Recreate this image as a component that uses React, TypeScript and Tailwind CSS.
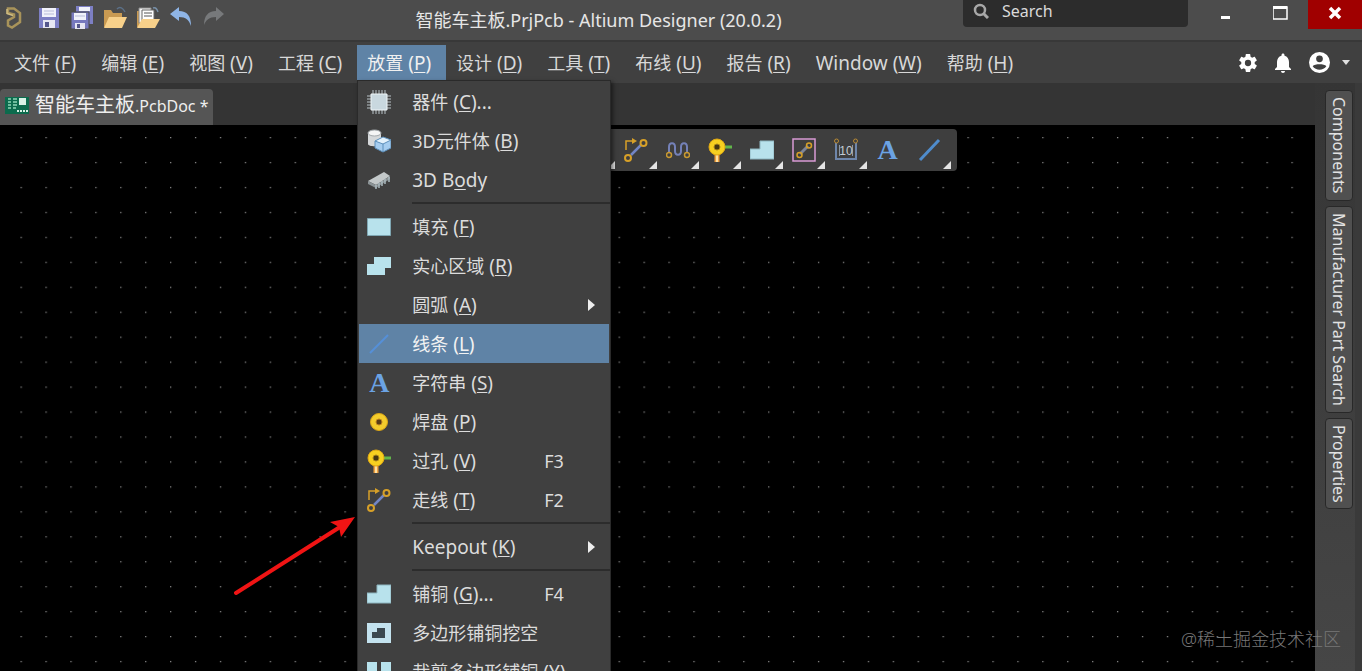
import React from 'react';

interface MenuEntry {
  label: string;
  hotkey: string;
}

interface PlaceEntry {
  label: string;
  latin?: string;
  hotkey?: string;
  after?: string;
  icon?: React.ReactNode;
  shortcut?: string;
  submenu?: boolean;
  active?: boolean;
  separator?: boolean;
}

const Svg: React.FC<{ children: React.ReactNode }> = ({ children }) => (
  <svg className="h-6 w-6 shrink-0" viewBox="0 0 24 24" fill="none" aria-hidden="true">
    {children}
  </svg>
);

const LogoIcon = () => (
  <svg className="h-6 w-[18px] shrink-0" viewBox="0 0 18 24" fill="none" aria-hidden="true">
    <path d="M3 2.500h6L15 7v9l-8 5.500-4-2v-5l6-3.500V8.500L3 7z" stroke="#a8935a" strokeWidth="2.500" />
    <path d="M2 3v4.500l6 2" stroke="#d0bd83" strokeWidth="1.500" />
  </svg>
);

const SaveIcon = () => (
  <Svg>
    <path d="M2 2h20v20H2z" fill="#7d7fc4" />
    <path d="M5 2h14v9H5z" fill="#f1f2fa" />
    <path d="M7 5h10M7 8h10" stroke="#b9bcd9" strokeWidth="1" />
    <path d="M6 14h12v8H6z" fill="#e6e6f2" />
    <path d="M8 16h4v5H8z" fill="#55578c" />
  </Svg>
);

const SaveAllIcon = () => (
  <Svg>
    <path d="M6 0h17v18H6z" fill="#7d7fc4" />
    <path d="M9 1h11v4H9z" fill="#f1f2fa" />
    <path d="M1 6h18v17H1z" fill="#7779be" stroke="#4c4c4c" strokeWidth="1" />
    <path d="M4 7h12v7H4z" fill="#f1f2fa" />
    <path d="M5 10h10" stroke="#b9bcd9" />
    <path d="M5 17h10v6H5z" fill="#e6e6f2" />
    <path d="M7 18h3v4H7z" fill="#55578c" />
  </Svg>
);

const FolderIcon = () => (
  <Svg>
    <path d="M1 4h7l2 3h9v14H1z" fill="#c99a52" />
    <path d="M1 22L6 11h18l-5 11z" fill="#f7d08a" />
    <path d="M14 3c3-3 6-1 8 3" stroke="#5b7088" strokeWidth="1.500" />
  </Svg>
);

const FolderDocsIcon = () => (
  <Svg>
    <path d="M1 5h6v16H1z" fill="#c99a52" />
    <path d="M3 2h12v15H3z" fill="#f6f6f6" stroke="#888" />
    <path d="M6 4h12v13H6z" fill="#fff" stroke="#666" />
    <path d="M8 7h8M8 10h8" stroke="#555" />
    <path d="M1 22L6 13h18l-5 9z" fill="#f7d08a" />
    <path d="M17 2c3-1 4 1 5 4" stroke="#7890a8" strokeWidth="1.500" />
  </Svg>
);

const UndoIcon = () => (
  <Svg>
    <path d="M1 8L10 1v4c8 0 12 5 12 15c-2-6-5-9-12-9v4z" fill="#8fb5e6" />
  </Svg>
);

const RedoIcon = () => (
  <Svg>
    <path d="M22 8L14 1v4C6 5 2 10 2 19c2-5 5-8 12-8v4z" fill="#77797b" />
  </Svg>
);

const ChipIcon = () => (
  <Svg>
    <path
      d="M6 0v24M9 0v24M12 0v24M15 0v24M18 0v24M0 6h24M0 9h24M0 12h24M0 15h24M0 18h24"
      stroke="#b9c3c8"
      strokeWidth="1"
    />
    <path d="M4 4h16v16H4z" fill="#c9d8df" />
    <path d="M4 4h16v16H4z" stroke="#eef4f6" />
  </Svg>
);

const ShapesIcon = () => (
  <Svg>
    <path d="M1 4v11c0 3 13 3 13 0V4z" fill="#d5d8da" />
    <ellipse cx="7.500" cy="4" rx="6.500" ry="3" fill="#f5f5f5" stroke="#a5aaad" />
    <path d="M8 12l8-4 8 3v8l-8 4-8-4z" fill="#a5cdf0" />
    <path d="M8 12l8 3 8-4-8-3z" fill="#e4f2fc" />
    <path d="M16 15v8M8 12l8 3 8-4M8 12v7l8 4 8-4v-8l-8-3z" stroke="#5c8fbb" />
  </Svg>
);

const DipIcon = () => (
  <Svg>
    <path d="M1 13L17 4l6 4-14 9z" fill="#c3c8c9" />
    <path d="M1 13v3l8 4 14-9V8L9 17z" fill="#8a9295" />
    <path d="M9 17v4M12 15v5M15 13v5M18 11v5M22 9v5" stroke="#a9b8bd" strokeWidth="1.500" />
  </Svg>
);

const FillIcon = () => (
  <Svg>
    <path d="M0.500 3.500h23v17h-23z" fill="#b8e2ec" stroke="#7fa6b2" />
  </Svg>
);

const RegionIcon = () => (
  <Svg>
    <path d="M7 3h17v11h-6v7H0v-11h7z" fill="#b8e2ec" />
  </Svg>
);

const LineIcon = () => (
  <Svg>
    <path d="M3 21L21 3" stroke="#5590d8" strokeWidth="2" />
  </Svg>
);

const ThickLineIcon = () => (
  <Svg>
    <path d="M2 22L21 2" stroke="#4f8ccc" strokeWidth="3" />
  </Svg>
);

const StringIcon = () => (
  <span className="w-6 shrink-0 text-center font-['Liberation_Serif',serif] text-[28px] leading-6 font-bold text-[#6ba3e4]">
    A
  </span>
);

const PadIcon = () => (
  <Svg>
    <circle cx="12" cy="12" r="8.500" fill="#f4cc2c" stroke="#dba616" />
    <circle cx="12" cy="12" r="3" fill="#573c17" stroke="#bd8220" />
  </Svg>
);

const ViaIcon = () => (
  <Svg>
    <path d="M9 14v10" stroke="#f0a040" strokeWidth="5" />
    <path d="M9 14v10" stroke="#ffe0a0" strokeWidth="2" />
    <path d="M14 9h10" stroke="#62b64a" strokeWidth="3" />
    <circle cx="9" cy="9" r="8" fill="#f7d020" stroke="#e0a812" />
    <circle cx="9" cy="9" r="3" fill="#453711" stroke="#aa851b" />
  </Svg>
);

const TrackIcon = () => (
  <Svg>
    <path d="M7 17L17 7" stroke="#7285c4" strokeWidth="2.500" />
    <path d="M2 12V3h8" stroke="#d7a028" strokeWidth="1.500" />
    <path d="M8 0l5 3-5 3z" fill="#d7a028" />
    <circle cx="19.500" cy="5" r="3" stroke="#d7a028" strokeWidth="2" />
    <circle cx="4" cy="20" r="3" stroke="#d7a028" strokeWidth="2" />
  </Svg>
);

const MeanderIcon = () => (
  <Svg>
    <path d="M3 14V9c0-5 6-5 6 0v4c0 5 6 5 6 0V9c0-5 6-5 6 0v5" stroke="#7481b8" strokeWidth="2" />
    <circle cx="3" cy="17" r="2.500" stroke="#c99930" strokeWidth="1.500" />
    <circle cx="21" cy="17" r="2.500" stroke="#c99930" strokeWidth="1.500" />
  </Svg>
);

const PourIcon = () => (
  <Svg>
    <path d="M10 3h14v18H0V11h10z" fill="#b8e2ec" stroke="#8eb6c0" strokeWidth="1" />
  </Svg>
);

const RoomIcon = () => (
  <Svg>
    <path d="M1 1h22v22H1z" stroke="#d99ad5" strokeWidth="1.500" />
    <path d="M8 16l8-8" stroke="#7d8598" strokeWidth="3" />
    <circle cx="17" cy="7.500" r="2.500" stroke="#d7a028" strokeWidth="1.500" />
    <circle cx="7.500" cy="17" r="2.500" stroke="#d7a028" strokeWidth="1.500" />
  </Svg>
);

const DimensionIcon = () => (
  <Svg>
    <path d="M2 5v16h20V5" stroke="#6e86ab" strokeWidth="2" />
    <path d="M5.500 7v11M18.500 7v11" stroke="#8d97a3" strokeWidth="1" />
    <text x="12" y="17" textAnchor="middle" fontSize="12" fill="#c3ccd4" fontFamily="Liberation Sans, sans-serif">
      10
    </text>
    <circle cx="2.500" cy="3" r="2" stroke="#b98a35" />
    <circle cx="21.500" cy="3" r="2" stroke="#b98a35" />
  </Svg>
);

const CutoutIcon = () => (
  <Svg>
    <path d="M0 2h24v20H0z" fill="#c3e2ee" />
    <path d="M10 7h8v10H5v-6h5z" fill="#3b4850" />
  </Svg>
);

const SliceIcon = () => (
  <Svg>
    <path d="M0 2h10v10H7v10H0zM14 2h10v20H14z" fill="#b8e2ec" />
  </Svg>
);

const DocIcon = () => (
  <Svg>
    <path d="M0 4h24v17H0z" fill="#0c6b4d" />
    <path d="M14 5h7v7h-7z" fill="#d8f2e6" />
    <path d="M3 6h3M3 9h3M3 12h3M3 15h3M8 6h4M8 9h4M8 12h4M8 15h3" stroke="#8fd8b8" strokeWidth="1.500" />
    <path d="M12 18h2M15 18h2M18 18h2M21 18h2" stroke="#d8f2e6" strokeWidth="2" />
  </Svg>
);

const quickTools = [
  { name: 'Save', icon: <SaveIcon /> },
  { name: 'Save All', icon: <SaveAllIcon /> },
  { name: 'Open', icon: <FolderIcon /> },
  { name: 'Open Project', icon: <FolderDocsIcon /> },
  { name: 'Undo', icon: <UndoIcon /> },
  { name: 'Redo', icon: <RedoIcon /> },
];

const menus: MenuEntry[] = [
  { label: '文件', hotkey: 'F' },
  { label: '编辑', hotkey: 'E' },
  { label: '视图', hotkey: 'V' },
  { label: '工程', hotkey: 'C' },
  { label: '放置', hotkey: 'P' },
  { label: '设计', hotkey: 'D' },
  { label: '工具', hotkey: 'T' },
  { label: '布线', hotkey: 'U' },
  { label: '报告', hotkey: 'R' },
  { label: 'Window', hotkey: 'W' },
  { label: '帮助', hotkey: 'H' },
];

const placeEntries: PlaceEntry[] = [
  { label: '器件', latin: ' (', hotkey: 'C', after: ')...', icon: <ChipIcon /> },
  { label: '3D元件体', latin: ' (', hotkey: 'B', after: ')', icon: <ShapesIcon /> },
  { label: '', latin: '3D B', hotkey: 'o', after: 'dy', icon: <DipIcon />, separator: true },
  { label: '填充', latin: ' (', hotkey: 'F', after: ')', icon: <FillIcon /> },
  { label: '实心区域', latin: ' (', hotkey: 'R', after: ')', icon: <RegionIcon /> },
  { label: '圆弧', latin: ' (', hotkey: 'A', after: ')', submenu: true },
  { label: '线条', latin: ' (', hotkey: 'L', after: ')', icon: <LineIcon />, active: true },
  { label: '字符串', latin: ' (', hotkey: 'S', after: ')', icon: <StringIcon /> },
  { label: '焊盘', latin: ' (', hotkey: 'P', after: ')', icon: <PadIcon /> },
  { label: '过孔', latin: ' (', hotkey: 'V', after: ')', icon: <ViaIcon />, shortcut: 'F3' },
  { label: '走线', latin: ' (', hotkey: 'T', after: ')', icon: <TrackIcon />, shortcut: 'F2', separator: true },
  { label: '', latin: 'Keepout (', hotkey: 'K', after: ')', submenu: true, separator: true },
  { label: '铺铜', latin: ' (', hotkey: 'G', after: ')...', icon: <PourIcon />, shortcut: 'F4' },
  { label: '多边形铺铜挖空', icon: <CutoutIcon /> },
  { label: '裁剪多边形铺铜', latin: ' (', hotkey: 'Y', after: ')', icon: <SliceIcon /> },
];

const activeTools = [
  { name: 'Fill', icon: <FillIcon />, more: true },
  { name: 'Region', icon: <RegionIcon />, more: true },
  { name: 'Component', icon: <ChipIcon />, more: false },
  { name: '3D Body', icon: <DipIcon />, more: true },
  { name: 'Cutout', icon: <CutoutIcon />, more: true },
  { name: 'Pad', icon: <PadIcon />, more: true },
  { name: 'Track', icon: <TrackIcon />, more: true },
  { name: 'Tuning', icon: <MeanderIcon />, more: true },
  { name: 'Via', icon: <ViaIcon />, more: true },
  { name: 'Polygon', icon: <PourIcon />, more: true },
  { name: 'Room', icon: <RoomIcon />, more: true },
  { name: 'Dimension', icon: <DimensionIcon />, more: true },
  { name: 'String', icon: <StringIcon />, more: false },
  { name: 'Line', icon: <ThickLineIcon />, more: true },
];

const sidePanels = ['Components', 'Manufacturer Part Search', 'Properties'];

const TitleBar: React.FC = () => (
  <header className="flex h-[42px] shrink-0 items-start border-b-2 border-[#383838] bg-[#4c4c4c]">
    <div className="flex w-[234px] shrink-0 items-center gap-[9px] pt-[6px] pl-[5px]">
      <LogoIcon />
      <div className="flex gap-[9px] pl-[5px]">
        {quickTools.map((tool) => (
          <button key={tool.name} aria-label={tool.name}>
            {tool.icon}
          </button>
        ))}
      </div>
    </div>
    <h1 className="flex-1 text-center text-[18px] leading-10 whitespace-nowrap text-[#e6e6e6]">
      智能车主板.PrjPcb - Altium Designer (20.0.2)
    </h1>
    <label className="flex h-[27px] w-[225px] items-center gap-[13px] rounded-b bg-[#2c2c2c] pb-[5px] pl-[10px]">
      <svg className="h-4 w-4" viewBox="0 0 16 16" fill="none" stroke="#a8a8a8" aria-hidden="true">
        <circle cx="7" cy="7" r="5" strokeWidth="2.500" />
        <path d="M10.500 10.500L15 15" strokeWidth="3" />
      </svg>
      <input
        type="text"
        aria-label="Search"
        placeholder="Search"
        className="w-40 bg-transparent text-base leading-6 text-white outline-none placeholder:text-[#dadada]"
      />
    </label>
    <div className="ml-3 flex">
      <button aria-label="Minimize" className="flex h-[29px] w-[54px] items-center justify-center">
        <svg className="h-4 w-4" viewBox="0 0 16 16" aria-hidden="true">
          <path d="M2 9h9v3H2z" fill="#fff" />
        </svg>
      </button>
      <button aria-label="Maximize" className="flex h-[29px] w-[54px] items-center justify-center pb-1">
        <svg className="h-4 w-4" viewBox="0 0 16 16" fill="none" aria-hidden="true">
          <path d="M0 2h14v12H0z" stroke="#fff" strokeWidth="1.500" />
          <path d="M0 2.500h14" stroke="#fff" strokeWidth="3" />
        </svg>
      </button>
      <button aria-label="Close" className="flex h-[29px] w-[54px] items-center justify-center bg-[#a00000] pb-1">
        <svg className="h-4 w-4" viewBox="0 0 16 16" aria-hidden="true">
          <path d="M3 3l10 10M13 3L3 13" stroke="#fff" strokeWidth="3.500" />
        </svg>
      </button>
    </div>
  </header>
);

const PlaceMenu: React.FC = () => (
  <div className="absolute top-full left-0 z-20 w-[254px] border border-[#2a2a2a] bg-[#404040] py-px shadow-[2px_2px_4px_rgba(0,0,0,0.5)]">
    {placeEntries.map((entry) => (
      <React.Fragment key={entry.label + entry.hotkey}>
        <button
          className={`mx-px flex h-[39px] w-[250px] items-center pl-2 text-left text-[18px] leading-7 whitespace-nowrap ${
            entry.active ? 'bg-[#5f83a6] text-[#f2f2f2]' : 'text-[#dcdcdc]'
          }`}
        >
          <span className="flex w-[45px] shrink-0 items-center">{entry.icon}</span>
          <span className="w-[132px] shrink-0">
            {entry.label}
            <span className="text-[19px]">
              {entry.latin}
              {entry.hotkey && <u className="underline-offset-2">{entry.hotkey}</u>}
              {entry.after}
            </span>
          </span>
          <span className="w-11 shrink-0">{entry.shortcut}</span>
          {entry.submenu && (
            <svg className="h-3 w-2" viewBox="0 0 8 12" aria-hidden="true">
              <path d="M0 0l7 6-7 6z" fill="#eee" />
            </svg>
          )}
        </button>
        {entry.separator && <hr className="my-[3px] ml-[54px] border-t-2 border-[#2c2c2c]" />}
      </React.Fragment>
    ))}
  </div>
);

const MenuBar: React.FC = () => (
  <nav className="flex h-[41px] shrink-0 items-start bg-[#404040] pt-[3px] pl-1">
    {menus.map((menu) => {
      const open = menu.hotkey === 'P';
      return (
        <div key={menu.hotkey} className="relative">
          <button
            aria-expanded={open}
            className={`block h-[35px] pr-[15px] pl-[10px] text-[19px] leading-9 whitespace-nowrap ${
              open ? 'bg-[#5f83a6] text-[#f0f0f0]' : 'text-[#d8d8d8]'
            }`}
          >
            <span className={menu.label === 'Window' ? 'text-[19px]' : 'text-[18px]'}>{menu.label}</span> (
            <u className="underline-offset-2">{menu.hotkey}</u>)
          </button>
          {open && <PlaceMenu />}
        </div>
      );
    })}
    <div className="ml-auto flex h-[35px] items-center pr-3">
      <button aria-label="Settings" className="mr-4">
        <svg className="h-[18px] w-[18px]" viewBox="2 2 20 20" fill="#fff" aria-hidden="true">
          <path d="M19.430 12.980c.04-.32.07-.64.07-.98s-.03-.66-.07-.98l2.110-1.650c.19-.15.24-.42.12-.64l-2-3.460c-.12-.22-.39-.3-.61-.22l-2.490 1c-.52-.4-1.080-.73-1.690-.98l-.38-2.650C14.460 2.180 14.250 2 14 2h-4c-.25 0-.46.18-.49.42l-.38 2.650c-.61.25-1.170.59-1.690.98l-2.490-1c-.23-.09-.49 0-.61.22l-2 3.460c-.13.22-.07.49.12.64l2.110 1.650c-.04.32-.07.65-.07.98s.03.66.07.98l-2.110 1.650c-.19.15-.24.42-.12.64l2 3.460c.12.22.39.3.61.22l2.490-1c.52.4 1.080.73 1.690.98l.38 2.650c.03.24.24.42.49.42h4c.25 0 .46-.18.49-.42l.38-2.650c.61-.25 1.170-.59 1.690-.98l2.490 1c.23.09.49 0 .61-.22l2-3.460c.12-.22.07-.49-.12-.64zM12 15.500a3.500 3.500 0 1 1 0-7 3.500 3.500 0 0 1 0 7z" />
        </svg>
      </button>
      <button aria-label="Notifications" className="mr-4">
        <svg className="h-5 w-5" viewBox="2 2 20 20" fill="#fff" aria-hidden="true">
          <path d="M12 22c1.100 0 2-.9 2-2h-4c0 1.100.9 2 2 2zm6-6v-5c0-3.070-1.640-5.640-4.500-6.320V4c0-.83-.67-1.500-1.500-1.500s-1.500.67-1.500 1.500v.68C7.630 5.360 6 7.920 6 11v5l-2 2v1h16v-1z" />
        </svg>
      </button>
      <button aria-label="Account" className="flex items-center gap-3">
        <svg className="h-[21px] w-[21px]" viewBox="0 0 20 20" aria-hidden="true">
          <circle cx="10" cy="10" r="10" fill="#fff" />
          <circle cx="10" cy="6.500" r="3.200" fill="#404040" />
          <path d="M3.500 13.500c2-2.500 11-2.500 13 0a7.800 7.800 0 0 1-13 0z" fill="#404040" />
        </svg>
        <svg className="h-[5px] w-2" viewBox="0 0 8 5" aria-hidden="true">
          <path d="M0 0h8L4 5z" fill="#e0e0e0" />
        </svg>
      </button>
    </div>
  </nav>
);

const Canvas: React.FC = () => (
  <main className="relative flex-1 bg-black">
    <svg className="absolute inset-0 h-full w-full" aria-hidden="true">
      <defs>
        <pattern id="grid" x="20.500" y="12" width="24.920" height="24.950" patternUnits="userSpaceOnUse">
          <path d="M0 0h1.300v1.300H0z" fill="#888" />
        </pattern>
      </defs>
      <rect width="100%" height="100%" fill="url(#grid)" />
    </svg>
    <div className="flex justify-center pt-1 pr-[2px]">
      <div className="relative flex h-[42px] rounded bg-[#3e3e3e] px-[6px]">
        {activeTools.map((tool) => (
          <button key={tool.name} aria-label={tool.name} className="relative flex w-[42px] items-center justify-center">
            {tool.icon}
            {tool.more && (
              <svg className="absolute right-0 bottom-[2px] h-2 w-2" viewBox="0 0 8 8" aria-hidden="true">
                <path d="M8 0v8H0z" fill="#e4e4e4" />
              </svg>
            )}
          </button>
        ))}
      </div>
    </div>
  </main>
);

const App: React.FC = () => {
  return (
    <div className="relative flex h-screen flex-col overflow-hidden bg-[#343434] font-['Noto_Sans','Noto_Sans_CJK_SC',sans-serif]">
      <TitleBar />
      <MenuBar />
      <div className="flex flex-1">
        <div className="flex flex-1 flex-col">
          <div className="flex h-[42px] shrink-0 items-end">
            <button className="flex h-9 items-center gap-[6px] rounded-t bg-[#555] pr-1 pb-1 pl-[5px] text-[#eee]">
              <DocIcon />
              <span className="text-xl leading-7 whitespace-nowrap">
                智能车主板<span className="text-base">.PcbDoc *</span>
              </span>
            </button>
          </div>
          <Canvas />
        </div>
        <aside className="flex w-[47px] flex-col items-end gap-[5px] border-r-[7px] border-[#3a3a3a] bg-linear-to-b from-[#353535] to-[#464646] pt-[7px] pr-[2px]">
          {sidePanels.map((panel) => (
            <button
              key={panel}
              className="w-7 rounded-sm border border-[#282828] bg-[#505050] pt-[6px] pb-[6px] text-base leading-[26px] whitespace-nowrap text-[#e2e2e2] [writing-mode:vertical-rl]"
            >
              {panel}
            </button>
          ))}
        </aside>
      </div>

      <svg className="absolute top-[510px] left-[230px] h-[90px] w-[130px]" viewBox="0 0 130 90" aria-hidden="true">
        <path d="M6 83L110 17" stroke="#f01414" strokeWidth="4" strokeLinecap="round" />
        <path d="M125 7L100 12l9 5 2 10z" fill="#f01414" />
      </svg>
      <p className="absolute right-[21px] bottom-[18px] text-[18px] leading-7 font-light text-[#777]">
        @稀土掘金技术社区
      </p>
    </div>
  );
};

export default App;
